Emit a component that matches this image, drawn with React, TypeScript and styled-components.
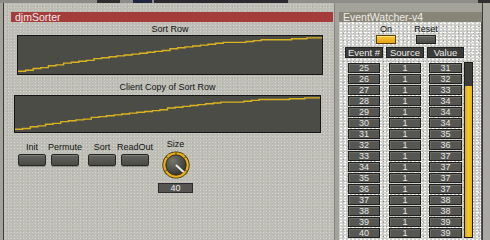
import React from "react";
import styled, { createGlobalStyle } from "styled-components";

const GlobalStyle = createGlobalStyle`
  html, body {
    margin: 0;
    padding: 0;
    background: #a3a39b;
  }
  body {
    font-family: "Liberation Sans", Arial, sans-serif;
  }
`;

const sortRow = [
    2, 3, 5, 6, 8, 9, 11, 12, 13, 14, 16, 17, 18, 19, 20, 21, 22, 23, 24, 25,
    27, 28, 29, 30, 31, 32, 33, 34, 34, 34, 35, 36, 37, 37, 37, 37, 38, 38, 39,
    39,
];

const stripSegments = [
    { w: 97, c: "#8b8b88" },
    { w: 23, c: "#2e2e2e" },
    { w: 13, c: "#8b8b88" },
    { w: 19, c: "#1f2540" },
    { w: 2, c: "#8b8b88" },
    { w: 134, c: "#2a2a30" },
    { w: 190, c: "#8e8e8a" },
    { w: 12, c: "#303030" },
];

const Screen = styled.div`
    width: 490px;
    height: 240px;
    overflow: hidden;
    background: #a3a39b;
    display: flex;
    flex-direction: column;
`;

const TopStrip = styled.div`
    display: flex;
    height: 3px;
    flex: none;
`;

const StripSeg = styled.div<{ $w: number; $c: string }>`
    width: ${(p) => p.$w}px;
    background: ${(p) => p.$c};
`;

const Body = styled.div`
    flex: 1;
    display: flex;
`;

const SorterPanel = styled.div`
    margin-left: 3px;
    width: 330px;
    border-left: 1px solid #3b3b38;
    border-right: 1px solid #85857e;
    background-color: #bebeb6;
    background-image: radial-gradient(
            rgba(255, 255, 255, 0.35) 0.5px,
            transparent 0.9px
        ),
        radial-gradient(rgba(0, 0, 0, 0.1) 0.5px, transparent 0.9px);
    background-size: 3px 3px, 5px 4px;
    background-position: 0 0, 1px 2px;
    padding-top: 9px;
    display: flex;
    flex-direction: column;
`;

const TitleBar = styled.div<{ $bg: string; $ml: number; $w: string }>`
    margin-left: ${(p) => p.$ml}px;
    width: ${(p) => p.$w};
    height: 10px;
    box-sizing: border-box;
    padding-left: 4px;
    background: ${(p) => p.$bg};
    color: #f1eaea;
    font-size: 10.5px;
    line-height: 10px;
    white-space: nowrap;
`;

const ChartBlock = styled.div<{ $ml: number; $w: number; $mt: number }>`
    margin-left: ${(p) => p.$ml}px;
    margin-top: ${(p) => p.$mt}px;
    width: ${(p) => p.$w}px;
    display: flex;
    flex-direction: column;
    align-items: center;
`;

const Label = styled.div`
    font-size: 9px;
    line-height: 10px;
    color: #111;
    white-space: nowrap;
`;

const ChartFrame = styled.div<{ $h: number; $gap: number }>`
    margin-top: ${(p) => p.$gap}px;
    width: 100%;
    height: ${(p) => p.$h}px;
    box-sizing: border-box;
    border: 1px solid #161616;
    background: #4b4c46;
    display: flex;
`;

const ControlRow = styled.div`
    margin-top: 6px;
    margin-left: 14px;
    display: flex;
    align-items: flex-start;
`;

const ButtonCol = styled.div<{ $ml: number }>`
    margin-left: ${(p) => p.$ml}px;
    width: 28px;
    padding-top: 3px;
    display: flex;
    flex-direction: column;
    align-items: center;
`;

const PushButton = styled.div`
    margin-top: 2px;
    width: 28px;
    height: 12px;
    box-sizing: border-box;
    border: 1px solid #262624;
    border-radius: 2px;
    background: linear-gradient(#646460, #4a4a47);
    box-shadow: inset 0 1px 0 #7c7c77, 0 1px 0 rgba(0, 0, 0, 0.25);
`;

const KnobCol = styled.div`
    margin-left: 9px;
    width: 35px;
    display: flex;
    flex-direction: column;
    align-items: center;
`;

const KnobSvg = styled.svg`
    margin-top: 2px;
    display: block;
`;

const NumberBox = styled.div`
    margin-top: 4px;
    width: 35px;
    height: 10px;
    box-sizing: border-box;
    border: 1px solid #2c2c2a;
    background: #555551;
    color: #ececec;
    font-size: 9px;
    line-height: 8px;
    text-align: center;
`;

const WatcherColumn = styled.div`
    margin-left: 4px;
    width: 143px;
    padding-top: 9px;
    display: flex;
    flex-direction: column;
`;

const Granite = styled.div`
    flex: 1;
    box-sizing: border-box;
    padding-left: 6px;
    border-right: 1px solid #55554f;
    background-color: #c9c9c6;
    background-image: radial-gradient(circle, #ffffff 0.8px, transparent 1.2px),
        radial-gradient(circle, rgba(70, 70, 70, 0.4) 0.6px, transparent 1px),
        radial-gradient(circle, #fafafa 0.7px, transparent 1.1px),
        radial-gradient(circle, rgba(130, 130, 126, 0.5) 0.6px, transparent 1px);
    background-size: 4px 3px, 5px 7px, 7px 5px, 3px 5px;
    background-position: 0 0, 2px 1px, 3px 3px, 1px 2px;
    display: flex;
    flex-direction: column;
`;

const Toggles = styled.div`
    margin-top: 2px;
    padding-left: 21px;
    display: flex;
`;

const ToggleCol = styled.div`
    width: 40px;
    display: flex;
    flex-direction: column;
    align-items: center;
`;

const Toggle = styled.div<{ $on: boolean }>`
    margin-top: 1px;
    width: 20px;
    height: 9px;
    box-sizing: border-box;
    border: 1px solid ${(p) => (p.$on ? "#5c4206" : "#222220")};
    background: ${(p) =>
        p.$on
            ? "linear-gradient(#f7c734, #e6a514)"
            : "linear-gradient(#63635f, #4b4b48)"};
    box-shadow: inset 0 1px 0
        ${(p) => (p.$on ? "#fde27a" : "#7a7a75")};
`;

const HeaderGrid = styled.div`
    margin-top: 3px;
    display: grid;
    grid-template-columns: 38px 38px 37px;
    column-gap: 3px;
`;

const HeaderCell = styled.div`
    height: 11px;
    box-sizing: border-box;
    border: 1px solid #222220;
    background: #3b3b39;
    color: #ececea;
    font-size: 9.5px;
    line-height: 9px;
    text-align: center;
    white-space: nowrap;
`;

const ListArea = styled.div`
    margin-top: 5px;
    display: flex;
    align-items: flex-start;
`;

const CellGrid = styled.div`
    display: grid;
    grid-template-columns: 38px 38px 37px;
    grid-auto-rows: 10px;
    column-gap: 3px;
    row-gap: 1px;
`;

const Cell = styled.div<{ $w: number }>`
    justify-self: center;
    width: ${(p) => p.$w}px;
    box-sizing: border-box;
    border: 1px solid #1f1f1d;
    background: #565652;
    box-shadow: inset 1px 1px 0 #6c6c67;
    color: #e8e8e6;
    font-size: 9px;
    line-height: 8px;
    text-align: center;
`;

const Meter = styled.div`
    margin-top: -1px;
    width: 9px;
    height: 176px;
    box-sizing: border-box;
    border: 1px solid #1c1c1a;
    background: #3d3e39;
    display: flex;
    flex-direction: column;
    justify-content: flex-end;
`;

const MeterFill = styled.div`
    background: linear-gradient(90deg, #d9a812, #f6c928 45%, #e3b31a);
`;

const RightEdge = styled.div`
    flex: 1;
    border-left: 1px solid #3c3c38;
    background: #a9a9a1;
`;

function stepPath(values: number[], w: number, h: number) {
    const n = values.length;
    const y = (v: number) => (h - 1 - (v / 40) * (h - 2)).toFixed(1);
    let d = `M0 ${y(values[0])}`;
    values.forEach((v, i) => {
        if (i > 0) d += ` V${y(v)}`;
        d += ` H${(((i + 1) * w) / n).toFixed(1)}`;
    });
    return d;
}

const RowChart = ({ w, h }: { w: number; h: number }) => (
    <svg width={w} height={h} viewBox={`0 0 ${w} ${h}`}>
        <path
            d={stepPath(sortRow, w, h)}
            fill="none"
            stroke="#dcb21e"
            strokeWidth={1.4}
        />
    </svg>
);

const Knob = () => (
    <KnobSvg width={28} height={28} viewBox="0 0 28 28">
        <defs>
            <radialGradient id="knobFace" cx="0.35" cy="0.3" r="0.8">
                <stop offset="0" stopColor="#77776f" />
                <stop offset="1" stopColor="#2f2f2c" />
            </radialGradient>
        </defs>
        <circle cx={14} cy={14} r={13.6} fill="#3a3000" />
        <circle cx={14} cy={14} r={12.8} fill="#eaae1c" />
        {[-90, -140, -40, 150, 30].map((a) => {
            const r = (a * Math.PI) / 180;
            return (
                <line
                    key={a}
                    x1={14 + Math.cos(r) * 10.8}
                    y1={14 + Math.sin(r) * 10.8}
                    x2={14 + Math.cos(r) * 13}
                    y2={14 + Math.sin(r) * 13}
                    stroke="#5a4408"
                    strokeWidth={1}
                />
            );
        })}
        <circle
            cx={14}
            cy={14}
            r={10.2}
            fill="url(#knobFace)"
            stroke="#1e1e1c"
            strokeWidth={0.8}
        />
        <line
            x1={14.5}
            y1={14.5}
            x2={21}
            y2={20.5}
            stroke="#ececea"
            strokeWidth={2}
            strokeLinecap="round"
        />
    </KnobSvg>
);

const buttons = [
    { label: "Init", ml: 0 },
    { label: "Permute", ml: 5 },
    { label: "Sort", ml: 9 },
    { label: "ReadOut", ml: 5 },
];

const App = () => {
    const rows = sortRow.slice(24).map((v, i) => ({
        event: 25 + i,
        source: 1,
        value: v,
    }));
    const last = rows[rows.length - 1].value;
    const meterPx = Math.round((last / 45) * 174);

    return (
        <Screen>
            <GlobalStyle />
            <TopStrip>
                {stripSegments.map((s, i) => (
                    <StripSeg key={i} $w={s.w} $c={s.c} />
                ))}
            </TopStrip>
            <Body>
                <SorterPanel>
                    <TitleBar $bg="#a53c3c" $ml={7} $w="322px">
                        djmSorter
                    </TitleBar>
                    <ChartBlock $ml={13} $w={306} $mt={2}>
                        <Label>Sort Row</Label>
                        <ChartFrame $h={40} $gap={1}>
                            <RowChart w={304} h={38} />
                        </ChartFrame>
                    </ChartBlock>
                    <ChartBlock $ml={10} $w={307} $mt={7}>
                        <Label>Client Copy of Sort Row</Label>
                        <ChartFrame $h={38} $gap={3}>
                            <RowChart w={305} h={36} />
                        </ChartFrame>
                    </ChartBlock>
                    <ControlRow>
                        {buttons.map((b) => (
                            <ButtonCol key={b.label} $ml={b.ml}>
                                <Label>{b.label}</Label>
                                <PushButton />
                            </ButtonCol>
                        ))}
                        <KnobCol>
                            <Label>Size</Label>
                            <Knob />
                            <NumberBox>40</NumberBox>
                        </KnobCol>
                    </ControlRow>
                </SorterPanel>
                <WatcherColumn>
                    <TitleBar $bg="#878676" $ml={0} $w="100%">
                        EventWatcher-v4
                    </TitleBar>
                    <Granite>
                        <Toggles>
                            <ToggleCol>
                                <Label>On</Label>
                                <Toggle $on />
                            </ToggleCol>
                            <ToggleCol>
                                <Label>Reset</Label>
                                <Toggle $on={false} />
                            </ToggleCol>
                        </Toggles>
                        <HeaderGrid>
                            <HeaderCell>Event #</HeaderCell>
                            <HeaderCell>Source</HeaderCell>
                            <HeaderCell>Value</HeaderCell>
                        </HeaderGrid>
                        <ListArea>
                            <CellGrid>
                                {rows.map((r) => (
                                    <React.Fragment key={r.event}>
                                        <Cell $w={32}>{r.event}</Cell>
                                        <Cell $w={32}>{r.source}</Cell>
                                        <Cell $w={33}>{r.value}</Cell>
                                    </React.Fragment>
                                ))}
                            </CellGrid>
                            <Meter>
                                <MeterFill style={{ height: meterPx }} />
                            </Meter>
                        </ListArea>
                    </Granite>
                </WatcherColumn>
                <RightEdge />
            </Body>
        </Screen>
    );
};

export default App;
